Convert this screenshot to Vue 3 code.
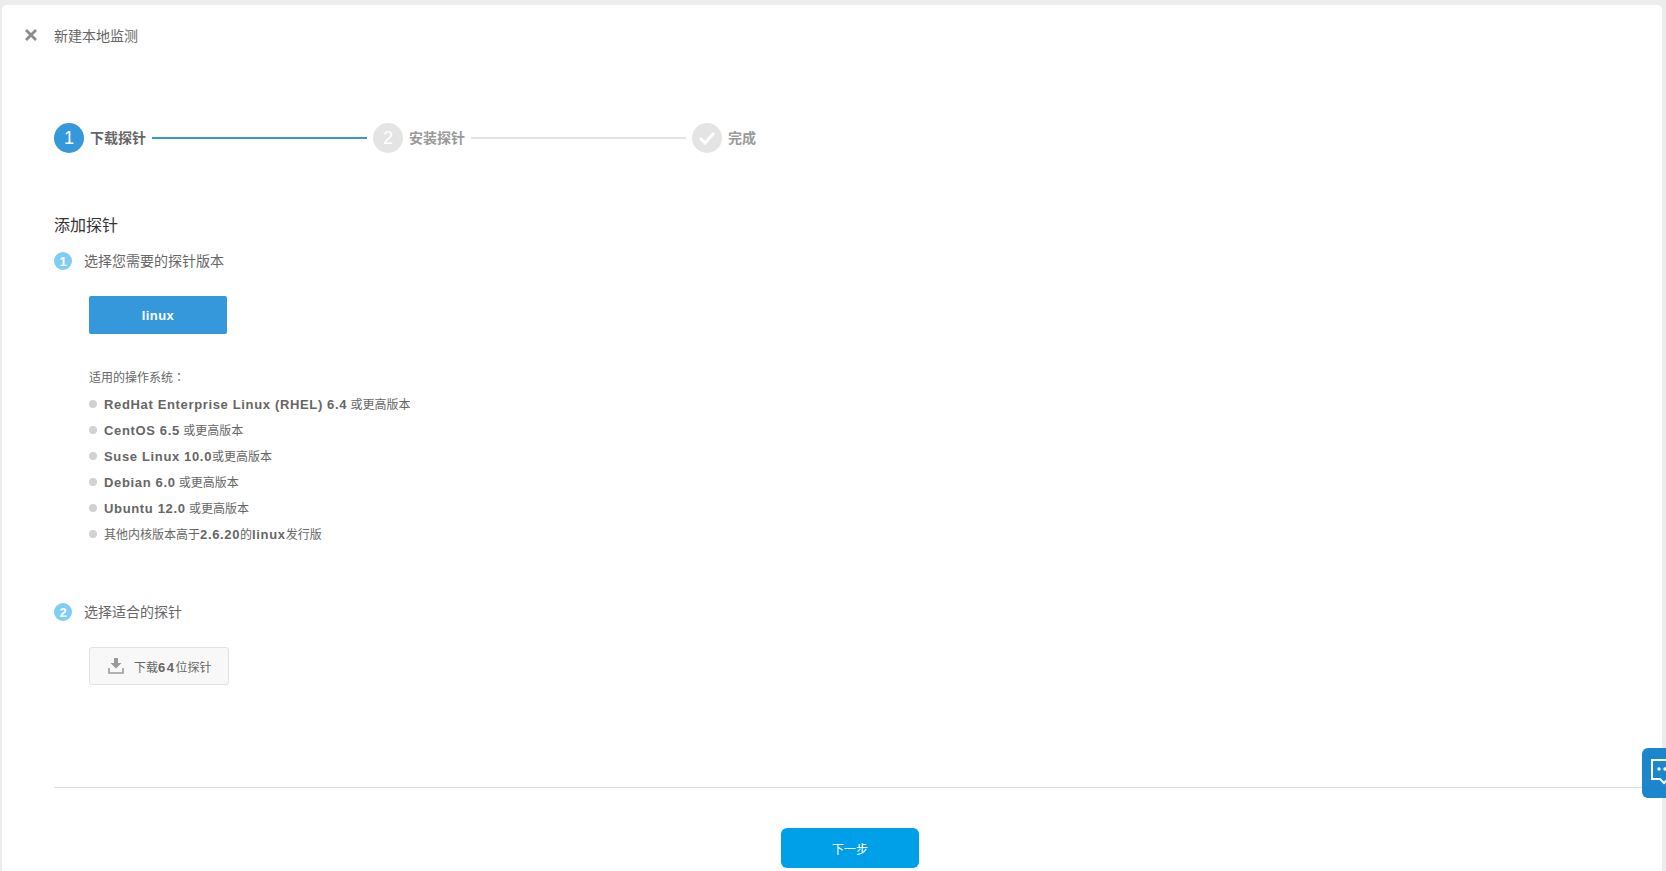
<script setup>
const systems = [
  { latin: 'RedHat Enterprise Linux (RHEL) 6.4', rest: ' 或更高版本' },
  { latin: 'CentOS 6.5', rest: ' 或更高版本' },
  { latin: 'Suse Linux 10.0', rest: '或更高版本' },
  { latin: 'Debian 6.0', rest: ' 或更高版本' },
  { latin: 'Ubuntu 12.0', rest: ' 或更高版本' }
]
</script>

<template>
  <div class="card">
    <header class="head">
      <svg class="close" width="12" height="12" viewBox="0 0 12 12"><path d="M1 1l10 10M11 1L1 11" stroke="#8c8c8c" stroke-width="2.8" fill="none"/></svg>
      <span>新建本地监测</span>
    </header>

    <div class="steps">
      <div class="dot active">1</div>
      <span class="step-label current">下载探针</span>
      <div class="bar active-bar"></div>
      <div class="dot">2</div>
      <span class="step-label">安装探针</span>
      <div class="bar"></div>
      <div class="dot">
        <svg width="18" height="14" viewBox="0 0 18 14"><path d="M2 7l5 5 9-10" stroke="#fff" stroke-width="3" fill="none"/></svg>
      </div>
      <span class="step-label">完成</span>
    </div>

    <h2 class="title">添加探针</h2>

    <div class="sub">
      <span class="badge">1</span>
      <span class="sub-text">选择您需要的探针版本</span>
    </div>

    <div class="linux">linux</div>

    <p class="os-label">适用的操作系统<span class="colon">：</span></p>
    <ul class="os-list">
      <li v-for="s in systems" :key="s.latin"><b class="latin">{{ s.latin }}</b>{{ s.rest }}</li>
      <li>其他内核版本高于<b class="latin">2.6.20</b>的<b class="latin">linux</b>发行版</li>
    </ul>

    <div class="sub second">
      <span class="badge">2</span>
      <span class="sub-text">选择适合的探针</span>
    </div>

    <div class="download">
      <svg width="16" height="16" viewBox="0 0 16 16"><path d="M6 0h4v5h3.500L8 10.500 2.500 5H6z" fill="#9a9a9a"/><path d="M1 10v5h14v-5" stroke="#9a9a9a" stroke-width="1.6" fill="none"/></svg>
      <span>下载<b class="latin wide">64</b>位探针</span>
    </div>

    <div class="rule"></div>

    <div class="foot">
      <div class="next">下一步</div>
    </div>
  </div>

  <div class="chat">
    <svg width="22" height="30" viewBox="0 0 22 30"><path d="M1 1h24v19h-8l-4 4-4-4H1z" stroke="#fff" stroke-width="2" fill="none"/><circle cx="8" cy="10" r="1.700" fill="#fff"/><circle cx="14" cy="10" r="1.700" fill="#fff"/></svg>
  </div>
</template>

<style>
html, body { margin: 0; background: #ececec; overflow: hidden; height: 100%; }
</style>

<style scoped>
.card {
  margin: 5px 4px 0 2px;
  padding: 0 16px 0 52px;
  height: 866px;
  box-sizing: border-box;
  background: #fff;
  border-radius: 5px 5px 0 0;
  color: #666;
  font-family: "Liberation Sans", "Noto Sans CJK SC", sans-serif;
  font-size: 12px;
}
.head { height: 60px; display: flex; align-items: center; font-size: 14px; color: #666; position: relative; }
.close { position: absolute; left: -29px; top: 24px; }
.steps { margin-top: 58px; display: flex; align-items: center; height: 30px; width: 708px; }
.dot {
  width: 30px; height: 30px; border-radius: 50%; background: #e4e4e4; color: #fff;
  display: flex; align-items: center; justify-content: center; font-size: 18px; flex: none;
}
.dot.active { background: #3498db; }
.step-label { margin: -2px 6px 0; font-size: 14px; font-weight: 700; color: #999; white-space: nowrap; }
.step-label.current { color: #666; }
.bar { flex: 1; height: 2px; margin-right: 6px; background: #e4e4e4; }
.active-bar { background: #3498db; }
.title { margin: 61px 0 0; font-size: 16px; font-weight: 400; line-height: 24px; color: #333; }
.sub { margin-top: 14px; display: flex; align-items: center; height: 18px; gap: 12px; font-size: 14px; color: #666; }
.sub-text { margin-top: -2px; }
.sub.second { margin-top: 56px; }
.badge {
  width: 18px; height: 18px; border-radius: 50%; background: #7fcdf2; color: #fff;
  display: flex; align-items: center; justify-content: center; font-size: 13px; font-weight: 700;
}
.linux {
  margin: 26px 0 0 35px; width: 138px; height: 38px; border-radius: 2px; background: #3498db; color: #fff;
  display: flex; align-items: center; justify-content: center;
  font-size: 13px; font-weight: 700; letter-spacing: 0.4px;
}
.os-label { margin: 32px 0 0 35px; line-height: 21px; height: 20px; }
.colon { font-family: "Noto Sans CJK TC", sans-serif; }
.os-list { margin: 5px 0 0 35px; padding: 0; list-style: none; }
.os-list li { height: 26px; line-height: 27px; position: relative; padding-left: 15px; white-space: pre; }
.os-list li::before {
  content: ""; position: absolute; left: 0; top: 9px; width: 8px; height: 8px; border-radius: 50%; background: #d2d2d2;
}
.latin { font-size: 13px; font-weight: 700; letter-spacing: 0.65px; }
.latin.wide { letter-spacing: 1.5px; }
.download {
  margin: 26px 0 0 35px; width: 140px; height: 38px; box-sizing: border-box;
  border: 1px solid #e2e2e2; border-radius: 3px; background: #f8f8f8;
  display: flex; align-items: center; padding-left: 18px; gap: 10px;
}
.rule { margin-top: 102px; height: 1px; background: #ddd; }
.foot { margin-top: 40px; display: flex; justify-content: center; }
.next {
  width: 138px; height: 40px; border-radius: 6px; background: #00a0e9; color: #fff;
  display: flex; align-items: center; justify-content: center;
}
.chat {
  position: fixed; right: 0; top: 748px; width: 24px; height: 50px; border-radius: 6px 0 0 6px;
  background: #1c86cc; overflow: hidden;
  padding: 11px 0 0 9px; box-sizing: border-box;
}
.chat svg { display: block; overflow: visible; }
</style>
